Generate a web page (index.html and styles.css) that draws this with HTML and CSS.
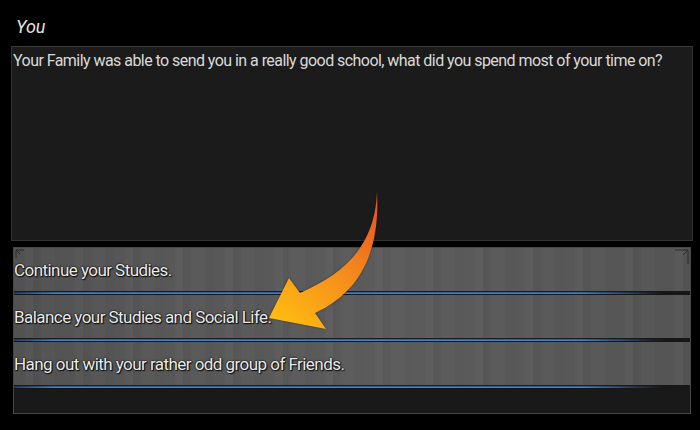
FILE: index.html
```html
<!DOCTYPE html>
<html>
<head>
<meta charset="utf-8">
<link rel="stylesheet" href="styles.css">
</head>
<body>
<div class="screen">
  <div class="speaker">You</div>
  <div class="dialog">Your Family was able to send you in a really good school, what did you spend most of your time on?</div>
  <div class="choices">
    <div class="choice"><span>Continue your Studies.</span></div>
    <div class="choice"><span>Balance your Studies and Social Life.</span></div>
    <div class="choice"><span>Hang out with your rather odd group of Friends.</span></div>
    <svg class="corner corner-l" width="18" height="10" viewBox="0 0 18 10"><path d="M1 9 V1 H6 M1 1 L5 5 M6 1 H9" stroke="#2a2a2a" stroke-width="1" fill="none"/></svg>
    <svg class="corner corner-r" width="18" height="16" viewBox="0 0 18 16"><path d="M17 15 V1 H11 M17 1 L12 6 M11 1 H4" stroke="#2a2a2a" stroke-width="1" fill="none"/></svg>
  </div>
  <svg class="arrow" width="700" height="430" viewBox="0 0 700 430">
    <defs>
      <linearGradient id="ag" x1="377" y1="192" x2="275" y2="318" gradientUnits="userSpaceOnUse">
        <stop offset="0" stop-color="#e64e1f"/>
        <stop offset="0.5" stop-color="#f58a1e"/>
        <stop offset="1" stop-color="#ffbb10"/>
      </linearGradient>
    </defs>
    <path d="M377 191 C380 245, 365 290, 315 313 L326 329 L269 318 L289 278 L300 293 C340 275, 375 250, 377 191 Z" fill="url(#ag)"/>
  </svg>
</div>
</body>
</html>
```
FILE: styles.css
```css
html, body {
  margin: 0;
  padding: 0;
  background: #000;
}
.screen {
  position: relative;
  width: 700px;
  height: 430px;
  display: flex;
  flex-direction: column;
  font-family: Roboto, "Noto Sans", sans-serif;
  color: #dcdcdc;
  overflow: hidden;
}
.speaker {
  padding: 16px 0 0 16px;
  height: 22px;
  line-height: 22px;
  font-size: 18px;
  font-style: italic;
  color: #e2e2e2;
  margin-bottom: 8px;
}
.dialog {
  margin-left: 11px;
  width: 682px;
  height: 195px;
  box-sizing: border-box;
  background: #1b1b1b;
  border: 1px solid #333;
  border-top-color: #3c3c3c;
  padding: 4px 0 0 1px;
  font-size: 16px;
  line-height: 20px;
  letter-spacing: -0.55px;
  color: #dadada;
}
.choices {
  position: relative;
  margin: 6px 0 0 13px;
  width: 678px;
  height: 167px;
  box-sizing: border-box;
  background: #191919;
  border: 1px solid #474747;
  display: flex;
  flex-direction: column;
}
.choice {
  position: relative;
  height: 47px;
  box-sizing: border-box;
  padding-bottom: 4px;
  display: flex;
  align-items: center;
  font-size: 17px;
  line-height: 20px;
  letter-spacing: -0.55px;
  color: #ececec;
  text-shadow: 0 0 1px #000, 0 0 2px #000, 1px 1px 1px #111;
  background:
    linear-gradient(90deg, rgba(0,0,0,0.07) 0%, rgba(0,0,0,0) 25%, rgba(255,255,255,0.02) 55%, rgba(0,0,0,0) 80%, rgba(0,0,0,0.04) 100%),
    repeating-linear-gradient(90deg, #585858 0 11px, #5c5c5c 11px 19px, #565656 19px 27px, #5a5a5a 27px 41px, #575757 41px 50px),
    #595959;
}
.choice::after {
  content: "";
  position: absolute;
  left: 0;
  right: 0;
  bottom: 0;
  height: 4px;
  background:
    linear-gradient(90deg, rgba(22,22,22,0.6) 0%, rgba(22,22,22,0) 6%, rgba(22,22,22,0) 84%, #171717 96%),
    linear-gradient(180deg, #1c1c1c 0 1px, #2f5d9c 1px 2px, #4a82c8 2px 3px, #151515 3px 4px);
}
.corner {
  position: absolute;
  top: 1px;
}
.corner-l { left: 1px; }
.corner-r { right: 1px; }
.arrow {
  position: absolute;
  left: 0;
  top: 0;
  pointer-events: none;
  filter: drop-shadow(0 0 1px rgba(0,0,0,0.4));
}
```
